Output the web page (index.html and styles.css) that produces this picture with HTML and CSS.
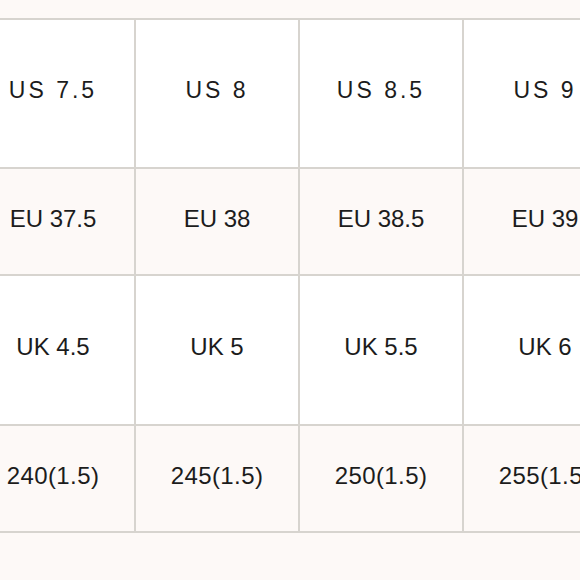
FILE: index.html
```html
<!DOCTYPE html>
<html lang="en">
<head>
<meta charset="utf-8">
<title>Size chart</title>
<link rel="stylesheet" href="styles.css">
</head>
<body>
<table class="chart">
  <tbody>
    <tr class="row-us tall">
      <td>US 7.5</td><td>US 8</td><td>US 8.5</td><td>US 9</td>
    </tr>
    <tr class="row-eu alt">
      <td>EU 37.5</td><td>EU 38</td><td>EU 38.5</td><td>EU 39</td>
    </tr>
    <tr class="row-uk tall">
      <td>UK 4.5</td><td>UK 5</td><td>UK 5.5</td><td>UK 6</td>
    </tr>
    <tr class="row-mm alt">
      <td>240(1.5)</td><td>245(1.5)</td><td>250(1.5)</td><td>255(1.5)</td>
    </tr>
  </tbody>
</table>
</body>
</html>
```
FILE: styles.css
```css
html, body {
  margin: 0;
  padding: 0;
  background: #fdf9f7;
  overflow: hidden;
}
body {
  width: 580px;
  height: 580px;
  padding-top: 18px;
  box-sizing: border-box;
  font-family: "Liberation Sans", Arial, sans-serif;
  color: #1c1c1c;
}
.chart {
  width: 658px;
  margin-left: -30px;
  border-collapse: separate;
  border-spacing: 2px;
  background: #d7d4cf;
  table-layout: fixed;
}
.chart td {
  width: 162px;
  padding: 0;
  text-align: center;
  vertical-align: middle;
  background: #ffffff;
  font-size: 24px;
  white-space: nowrap;
  overflow: hidden;
}
.tall td {
  height: 141px;
  padding-bottom: 6px;
}
.row-uk td { height: 142px; }
.alt td {
  height: 99px;
  padding-bottom: 6px;
  background: #fdf9f7;
}
.row-mm td {
  letter-spacing: 0.4px;
}
.row-us td {
  letter-spacing: 3px;
  font-size: 23px;
}
```
